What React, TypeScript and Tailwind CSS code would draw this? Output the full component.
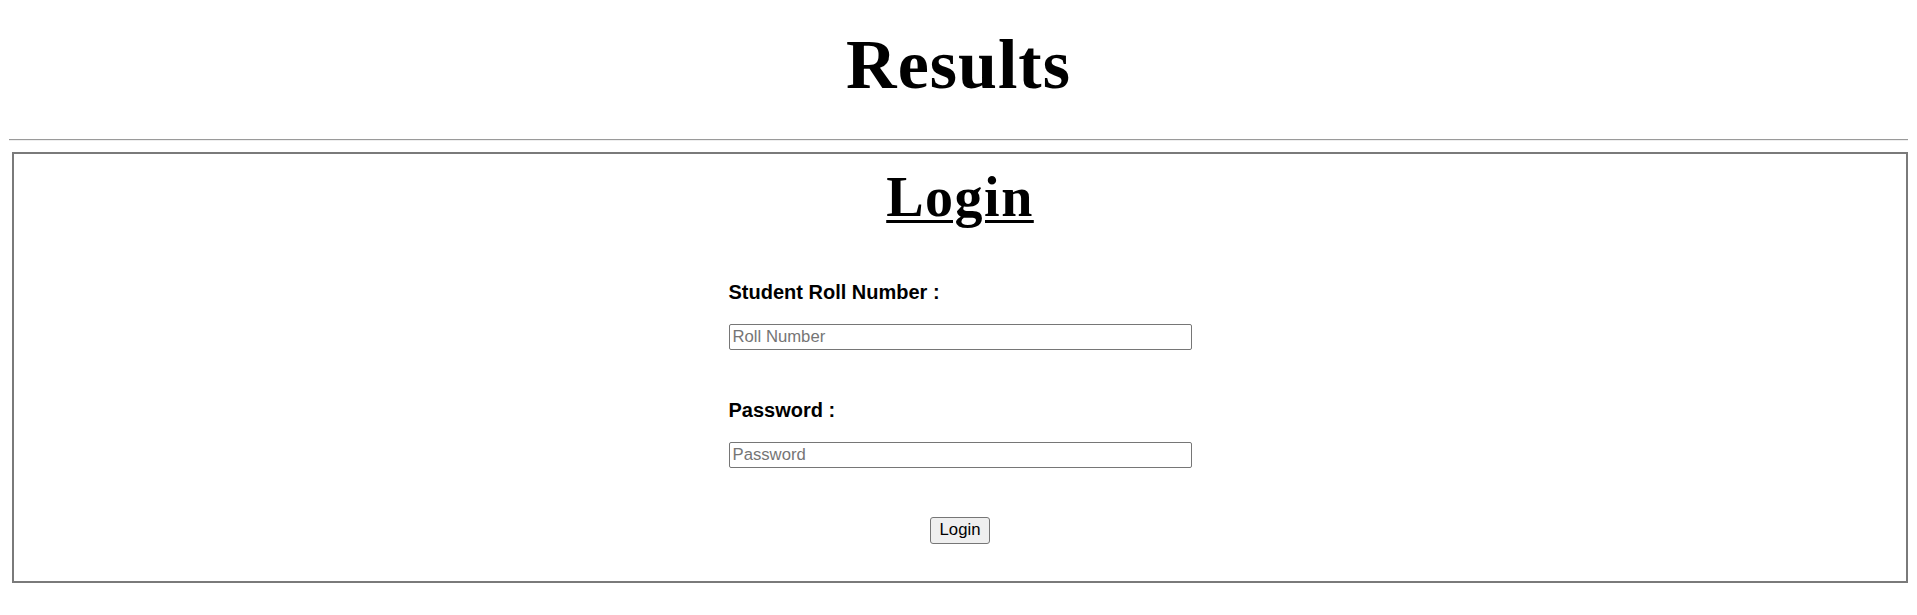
export default function App() {
  return (
    <div className="h-[615px] overflow-hidden bg-white pt-[31px] text-black">
      <h1 className="text-center font-['Liberation_Serif',serif] text-[70px] leading-[67px] font-bold tracking-[1px]">
        Results
      </h1>
      <hr className="mx-[9px] mt-[41px] h-[2px] border-0 border-t border-b border-t-[#9a9a9a] border-b-[#eeeeee]" />
      <div className="mt-[11px] ml-[12px] mr-[9px] border-2 border-[#7a7a7a] pt-[17px] pb-[37px]">
        <h2 className="text-center font-['Liberation_Serif',serif] text-[56px] leading-[52px] font-bold tracking-[1.5px] underline decoration-[3px] underline-offset-[4px]">
          Login
        </h2>
        <form
          className="mx-auto mt-[58px] flex w-[463px] flex-col font-['Liberation_Sans',Arial,sans-serif]"
          onSubmit={(e) => e.preventDefault()}
        >
          <label htmlFor="roll" className="text-[20px] leading-[22px] font-bold">
            Student Roll Number :
          </label>
          <input
            id="roll"
            type="text"
            placeholder="Roll Number"
            className="mt-[21px] h-[26px] w-[463px] rounded-[2px] border border-[#767676] bg-white px-[3px] text-[16.7px] text-black placeholder:text-[#757575] outline-none"
          />
          <label htmlFor="pw" className="mt-[49px] text-[20px] leading-[22px] font-bold">
            Password :
          </label>
          <input
            id="pw"
            type="password"
            placeholder="Password"
            className="mt-[21px] h-[26px] w-[463px] rounded-[2px] border border-[#767676] bg-white px-[3px] text-[16.7px] text-black placeholder:text-[#757575] outline-none"
          />
          <div className="mt-[49px] flex justify-center">
            <button
              type="submit"
              className="h-[27px] w-[60px] rounded-[3px] border border-[#767676] bg-[#efefef] text-[16.7px] leading-none text-black"
            >
              Login
            </button>
          </div>
        </form>
      </div>
    </div>
  );
}
